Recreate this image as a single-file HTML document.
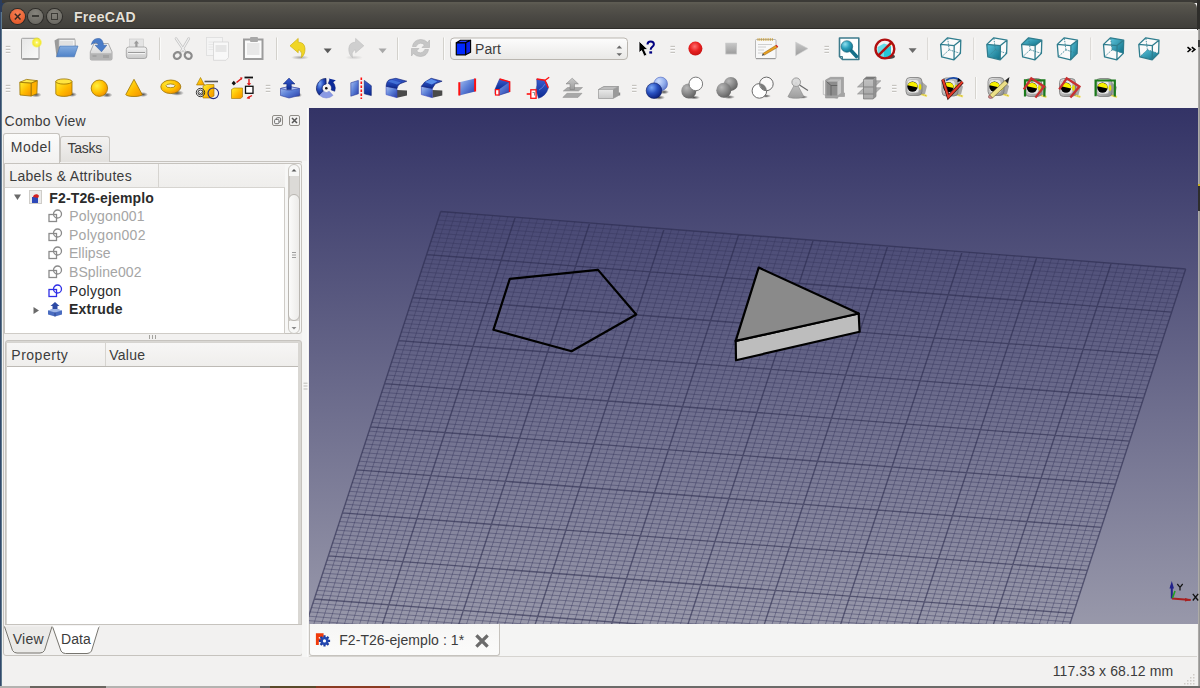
<!DOCTYPE html>
<html><head><meta charset="utf-8">
<style>
*{margin:0;padding:0;box-sizing:border-box}
html,body{width:1200px;height:688px;overflow:hidden;background:#f2f1f0;font-family:"Liberation Sans", sans-serif;}
.a{position:absolute}
.t{position:absolute;white-space:nowrap;color:#3c3c3c}
</style></head><body>
<div class="a" style="left:0;top:0;width:1200px;height:3px;background:#3b3a36"></div>
<div class="a" style="left:0;top:0;width:2px;height:686px;background:linear-gradient(90deg,#33496b 0,#33496b 1px,#5d788c 1px)"></div>
<div class="a" style="left:1197px;top:0;width:3px;height:30px;background:#2e2d2a"></div><div class="a" style="left:1197.5px;top:29px;width:2.5px;height:659px;background:linear-gradient(90deg,#b8b6b2,#8a8a8a)"></div><div class="a" style="left:1198px;top:40px;width:2px;height:7px;background:#3a3a3a"></div><div class="a" style="left:1198px;top:184px;width:2px;height:27px;background:#2e2e2e"></div><div class="a" style="left:1198px;top:184px;width:2px;height:1.5px;background:#c8b020"></div>
<div class="a" style="left:0;top:686px;width:1200px;height:2px;background:#6c6b69"></div>
<div class="a" style="left:0;top:686px;width:260px;height:2px;background:#b4b3b0"></div>
<div class="a" style="left:30px;top:686px;width:76px;height:2px;background:#6a6660"></div>
<div class="a" style="left:270px;top:686px;width:46px;height:2px;background:#5a4a2a"></div>
<div class="a" style="left:316px;top:686px;width:74px;height:2px;background:#8a3c22"></div>
<div class="a" style="left:0;top:0;width:12px;height:12px;background:#2a3c5c"></div><div class="a" style="left:2px;top:0;width:10px;height:3px;background:#3b3a36"></div>
<div class="a" style="left:2px;top:2px;width:1195px;height:27px;border-radius:6px 6px 0 0;background:linear-gradient(#5f5d54 0,#5c5a51 1.5px,#57554d 3px,#4b4944 14px,#3f3e3a 100%);"></div>
<div class="a" style="left:2px;top:28px;width:1195px;height:1px;background:#2e2d2a"></div>
<div class="a" style="left:2px;top:29px;width:1195px;height:2px;background:linear-gradient(#fdfdfd,#f6f6f5)"></div>
<div class="a" style="left:9.7px;top:8.7px;width:15.3px;height:15.3px;border-radius:50%;background:radial-gradient(circle at 50% 30%,#f78055,#e0501f);box-shadow:0 0 0 1px #2e2d2a"></div>
<svg class="a" style="left:9.7px;top:8.7px" width="16" height="16"><path d="M4.8 4.8L10.5 10.5M10.5 4.8L4.8 10.5" stroke="#3a2a22" stroke-width="1.5"/></svg>
<div class="a" style="left:28px;top:8.7px;width:15.3px;height:15.3px;border-radius:50%;background:radial-gradient(circle at 50% 30%,#85837c,#65635d);box-shadow:0 0 0 1px #2e2d2a"></div>
<div class="a" style="left:32.3px;top:15.4px;width:7px;height:1.6px;background:#3b3a36"></div>
<div class="a" style="left:46.7px;top:8.7px;width:15.3px;height:15.3px;border-radius:50%;background:radial-gradient(circle at 50% 30%,#85837c,#65635d);box-shadow:0 0 0 1px #2e2d2a"></div>
<div class="a" style="left:51.2px;top:13.2px;width:6.8px;height:6.8px;border:1.4px solid #3b3a36"></div>
<div class="t" style="left:74px;top:9.7px;font-size:14px;line-height:14px;font-weight:bold;color:#e4e0d8;letter-spacing:0.3px;text-shadow:0 0 1.5px #222">FreeCAD</div>

<div class="a" style="left:309px;top:108px;width:889px;height:516px;background:linear-gradient(#333366,#9898aa);overflow:hidden">
<svg width="889" height="516" style="position:absolute;left:0;top:0">
<path d="M139.1 104.1L-29.3 620.7M146.6 104.7L-21.9 621.2M154.1 105.2L-14.4 621.8M161.5 105.8L-7.0 622.4M168.9 106.4L0.5 623.0M176.4 106.9L7.9 623.5M183.8 107.5L15.4 624.1M191.3 108.1L22.8 624.7M198.8 108.7L30.3 625.3M213.6 109.8L45.2 626.4M221.1 110.4L52.6 627.0M228.5 111.0L60.1 627.6M236.0 111.6L67.5 628.1M243.5 112.1L75.0 628.7M250.9 112.7L82.4 629.3M258.4 113.3L89.9 629.9M265.8 113.8L97.3 630.4M273.2 114.4L104.8 631.0M288.1 115.6L119.7 632.2M295.6 116.2L127.1 632.7M303.0 116.7L134.6 633.3M310.5 117.3L142.0 633.9M318.0 117.9L149.5 634.5M325.4 118.4L156.9 635.0M332.9 119.0L164.4 635.6M340.3 119.6L171.8 636.2M347.8 120.2L179.3 636.8M362.6 121.3L194.2 637.9M370.1 121.9L201.6 638.5M377.5 122.5L209.1 639.1M385.0 123.1L216.5 639.6M392.5 123.6L224.0 640.2M399.9 124.2L231.4 640.8M407.4 124.8L238.9 641.4M414.8 125.3L246.3 641.9M422.2 125.9L253.8 642.5M437.1 127.1L268.7 643.7M444.6 127.7L276.1 644.2M452.0 128.2L283.6 644.8M459.5 128.8L291.0 645.4M467.0 129.4L298.5 646.0M474.4 129.9L305.9 646.5M481.9 130.5L313.4 647.1M489.3 131.1L320.8 647.7M496.8 131.7L328.3 648.3M511.6 132.8L343.2 649.4M519.1 133.4L350.6 650.0M526.5 134.0L358.1 650.6M534.0 134.6L365.5 651.1M541.5 135.1L373.0 651.7M548.9 135.7L380.4 652.3M556.4 136.3L387.9 652.9M563.8 136.8L395.3 653.4M571.2 137.4L402.8 654.0M586.1 138.6L417.7 655.2M593.6 139.2L425.1 655.7M601.0 139.7L432.6 656.3M608.5 140.3L440.0 656.9M616.0 140.9L447.5 657.5M623.4 141.4L454.9 658.0M630.9 142.0L462.4 658.6M638.3 142.6L469.8 659.2M645.8 143.2L477.3 659.8M660.6 144.3L492.2 660.9M668.1 144.9L499.6 661.5M675.5 145.5L507.1 662.1M683.0 146.1L514.5 662.6M690.5 146.6L522.0 663.2M697.9 147.2L529.4 663.8M705.3 147.8L536.9 664.4M712.8 148.4L544.3 664.9M720.2 148.9L551.8 665.5M735.1 150.1L566.7 666.7M742.6 150.6L574.1 667.2M750.0 151.2L581.6 667.8M757.5 151.8L589.0 668.4M765.0 152.4L596.5 669.0M772.4 152.9L603.9 669.5M779.8 153.5L611.4 670.1M787.3 154.1L618.8 670.7M794.8 154.7L626.3 671.3M809.6 155.8L641.2 672.4M817.1 156.4L648.6 673.0M824.5 157.0L656.1 673.6M832.0 157.6L663.5 674.1M839.5 158.1L671.0 674.7M846.9 158.7L678.4 675.3M854.3 159.3L685.9 675.9M861.8 159.9L693.3 676.4M869.2 160.4L700.8 677.0M130.3 107.8L875.3 165.3M128.9 112.1L873.9 169.6M127.5 116.4L872.5 173.9M126.1 120.7L871.1 178.2M124.7 125.0L869.7 182.5M123.3 129.3L868.3 186.8M121.9 133.6L866.9 191.1M120.5 137.9L865.5 195.4M119.1 142.2L864.1 199.7M116.3 150.9L861.3 208.4M114.9 155.2L859.9 212.7M113.4 159.5L858.4 217.0M112.0 163.8L857.0 221.3M110.6 168.1L855.6 225.6M109.2 172.4L854.2 229.9M107.8 176.7L852.8 234.2M106.4 181.0L851.4 238.5M105.0 185.3L850.0 242.8M102.2 193.9L847.2 251.4M100.8 198.2L845.8 255.7M99.4 202.5L844.4 260.0M98.0 206.8L843.0 264.3M96.6 211.1L841.6 268.6M95.2 215.4L840.2 272.9M93.8 219.7L838.8 277.2M92.4 224.0L837.4 281.5M91.0 228.3L836.0 285.8M88.2 237.0L833.2 294.5M86.8 241.3L831.8 298.8M85.4 245.6L830.4 303.1M84.0 249.9L829.0 307.4M82.6 254.2L827.6 311.7M81.2 258.5L826.2 316.0M79.8 262.8L824.8 320.3M78.3 267.1L823.3 324.6M76.9 271.4L821.9 328.9M74.1 280.0L819.1 337.5M72.7 284.3L817.7 341.8M71.3 288.6L816.3 346.1M69.9 292.9L814.9 350.4M68.5 297.2L813.5 354.7M67.1 301.5L812.1 359.0M65.7 305.8L810.7 363.3M64.3 310.1L809.3 367.6M62.9 314.4L807.9 371.9M60.1 323.1L805.1 380.6M58.7 327.4L803.7 384.9M57.3 331.7L802.3 389.2M55.9 336.0L800.9 393.5M54.5 340.3L799.5 397.8M53.1 344.6L798.1 402.1M51.7 348.9L796.7 406.4M50.3 353.2L795.3 410.7M48.9 357.5L793.9 415.0M46.1 366.1L791.1 423.6M44.7 370.4L789.7 427.9M43.2 374.7L788.2 432.2M41.8 379.0L786.8 436.5M40.4 383.3L785.4 440.8M39.0 387.6L784.0 445.1M37.6 391.9L782.6 449.4M36.2 396.2L781.2 453.7M34.8 400.5L779.8 458.0M32.0 409.2L777.0 466.7M30.6 413.5L775.6 471.0M29.2 417.8L774.2 475.3M27.8 422.1L772.8 479.6M26.4 426.4L771.4 483.9M25.0 430.7L770.0 488.2M23.6 435.0L768.6 492.5M22.2 439.3L767.2 496.8M20.8 443.6L765.8 501.1M18.0 452.2L763.0 509.7M16.6 456.5L761.6 514.0M15.2 460.8L760.2 518.3M13.8 465.1L758.8 522.6M12.4 469.4L757.4 526.9M11.0 473.7L756.0 531.2M9.6 478.0L754.6 535.5M8.1 482.3L753.1 539.8M6.7 486.6L751.7 544.1M3.9 495.3L748.9 552.8M2.5 499.6L747.5 557.1M1.1 503.9L746.1 561.4M-0.3 508.2L744.7 565.7M-1.7 512.5L743.3 570.0M-3.1 516.8L741.9 574.3M-4.5 521.1L740.5 578.6M-5.9 525.4L739.1 582.9M-7.3 529.7L737.7 587.2M-10.1 538.3L734.9 595.8M-11.5 542.6L733.5 600.1M-12.9 546.9L732.1 604.4M-14.3 551.2L730.7 608.7M-15.7 555.5L729.3 613.0M-17.1 559.8L727.9 617.3M-18.5 564.1L726.5 621.6M-19.9 568.4L725.1 625.9M-21.3 572.7L723.7 630.2M-24.1 581.4L720.9 638.9M-25.5 585.7L719.5 643.2M-27.0 590.0L718.0 647.5M-28.4 594.3L716.6 651.8M-29.8 598.6L715.2 656.1M-31.2 602.9L713.8 660.4M-32.6 607.2L712.4 664.7M-34.0 611.5L711.0 669.0M-35.4 615.8L709.6 673.3" stroke="#34345a" stroke-opacity="0.42" stroke-width="1" fill="none"/>
<path d="M131.7 103.5L-36.8 620.1M206.2 109.2L37.7 625.8M280.7 115.0L112.2 631.6M355.2 120.8L186.7 637.3M429.7 126.5L261.2 643.1M504.2 132.2L335.7 648.8M578.7 138.0L410.2 654.6M653.2 143.8L484.7 660.3M727.7 149.5L559.2 666.1M802.2 155.2L633.7 671.8M876.7 161.0L708.2 677.6M131.7 103.5L876.7 161.0M117.7 146.6L862.7 204.1M103.6 189.6L848.6 247.1M89.6 232.6L834.6 290.1M75.5 275.7L820.5 333.2M61.5 318.8L806.5 376.2M47.5 361.8L792.5 419.3M33.4 404.8L778.4 462.3M19.4 447.9L764.4 505.4M5.3 491.0L750.3 548.5M-8.7 534.0L736.3 591.5M-22.7 577.0L722.3 634.5M-36.8 620.1L708.2 677.6" stroke="#2a2a4c" stroke-opacity="0.6" stroke-width="1.35" fill="none"/>
<polygon points="200.8,170.9 289.0,161.9 327.2,206.5 262.6,243.3 184.4,221.8" fill="none" stroke="#000" stroke-width="2.2" stroke-linejoin="round"/><polygon points="426.7,232.9 549.7,205.5 550.6,223.8 427.0,252.2" fill="#bdbdbd" stroke="#000" stroke-width="2.2" stroke-linejoin="round"/><polygon points="449.7,159.6 549.7,205.5 426.7,232.9" fill="#8a8a8a" stroke="#000" stroke-width="2.2" stroke-linejoin="round"/>
</svg>
</div>
<div class="t" style="left:4.6px;top:113.7px;font-size:14px;line-height:14px;font-weight:400;color:#3c3c3c;letter-spacing:0.208px">Combo View</div>
<div class="a" style="left:272px;top:115px;width:11px;height:11px;border:1px solid #8f8c87;border-radius:2px;background:#f2f1f0"></div>
<svg class="a" style="left:272px;top:115px" width="11" height="11"><rect x="4.3" y="2.7" width="4.3" height="4.3" rx="1" fill="none" stroke="#606060" stroke-width="0.9"/><rect x="2.6" y="4.4" width="4.3" height="4.3" rx="1" fill="#f6f6f6" stroke="#606060" stroke-width="0.9"/></svg>
<div class="a" style="left:289px;top:115px;width:11px;height:11px;border:1px solid #8f8c87;border-radius:2px;background:#f2f1f0"></div>
<svg class="a" style="left:289px;top:115px" width="11" height="11"><path d="M3 3L8 8M8 3L3 8" stroke="#555" stroke-width="1.5"/></svg>
<div class="a" style="left:2.5px;top:161px;width:300px;height:495px;border:1px solid #c6c3be;border-radius:0 3px 3px 3px;background:#f2f1f0"></div>
<div class="a" style="left:60px;top:135.5px;width:49.5px;height:26px;border:1px solid #c6c3be;border-bottom:none;border-radius:3px 3px 0 0;background:linear-gradient(#f3f2f1,#e3e1de)"></div>
<div class="a" style="left:2.5px;top:132.5px;width:57.5px;height:30px;border:1px solid #c6c3be;border-bottom:none;border-radius:3px 3px 0 0;background:linear-gradient(#fbfbfa,#f2f1f0)"></div>
<div class="t" style="left:10.8px;top:139.5px;font-size:14px;line-height:14px;font-weight:400;color:#3c3c3c;letter-spacing:0.452px">Model</div>
<div class="t" style="left:67.5px;top:140.5px;font-size:14px;line-height:14px;font-weight:400;color:#3c3c3c;letter-spacing:-0.259px">Tasks</div>
<div class="a" style="left:4px;top:163px;width:297.5px;height:171px;border:1px solid #c6c3be;border-radius:0 3px 3px 0;background:#f7f7f6"></div>
<div class="a" style="left:5px;top:164px;width:280px;height:169.5px;border-right:1px solid #cfccc7;border-bottom:1px solid #cfccc7;background:#fff"></div>
<div class="a" style="left:5px;top:164px;width:279.5px;height:23.5px;background:linear-gradient(#f5f4f3,#efeeec);border-bottom:1px solid #d6d4d0"></div>
<div class="a" style="left:158px;top:164px;width:1px;height:23px;background:#d6d4d0"></div>
<div class="a" style="left:288px;top:163.5px;width:12px;height:170px;border:1px solid #c9c6c1;border-radius:6px;background:#f7f7f6"></div>
<div class="a" style="left:288.5px;top:176px;width:11px;height:145px;background:#dcdad7;border-left:1px solid #c9c6c1;border-right:1px solid #c9c6c1"></div>
<div class="a" style="left:288px;top:193.5px;width:12px;height:127px;border:1px solid #b9b6b1;border-radius:6px;background:linear-gradient(90deg,#fbfbfa,#ecebe9)"></div>
<svg class="a" style="left:288px;top:163px" width="12" height="172"><path d="M3.5 8.5L6 6L8.5 8.5Z" fill="#5a5a5a"/><path d="M3.5 164L6 166.5L8.5 164Z" fill="#8a8a8a"/><path d="M4 89.5H8M4 92H8M4 94.5H8" stroke="#888" stroke-width="0.8"/></svg>
<div class="t" style="left:9.3px;top:169.3px;font-size:14px;line-height:14px;font-weight:400;color:#3c3c3c;letter-spacing:0.315px">Labels &amp; Attributes</div>
<div class="t" style="left:49.3px;top:191.0px;font-size:14px;line-height:14px;font-weight:700;color:#2b2b2b;letter-spacing:0.143px">F2-T26-ejemplo</div>
<div class="t" style="left:69.3px;top:209.3px;font-size:14px;line-height:14px;font-weight:400;color:#a5a5a5;letter-spacing:0.145px">Polygon001</div>
<div class="t" style="left:69.0px;top:227.7px;font-size:14px;line-height:14px;font-weight:400;color:#a5a5a5;letter-spacing:0.275px">Polygon002</div>
<div class="t" style="left:69.0px;top:246.1px;font-size:14px;line-height:14px;font-weight:400;color:#a5a5a5;letter-spacing:0.036px">Ellipse</div>
<div class="t" style="left:69.0px;top:265.0px;font-size:14px;line-height:14px;font-weight:400;color:#a5a5a5;letter-spacing:0.097px">BSpline002</div>
<div class="t" style="left:69.0px;top:283.7px;font-size:14px;line-height:14px;font-weight:400;color:#2b2b2b;letter-spacing:0.244px">Polygon</div>
<div class="t" style="left:69.0px;top:302.1px;font-size:14px;line-height:14px;font-weight:700;color:#2b2b2b;letter-spacing:0.225px">Extrude</div>
<svg class="a" style="left:13px;top:193px" width="9" height="8"><path d="M1 1.5H8L4.5 7Z" fill="#6a6a6a"/></svg><svg class="a" style="left:32px;top:305.5px" width="8" height="9"><path d="M1.5 1V8L7 4.5Z" fill="#6a6a6a"/></svg>
<svg class="a" style="left:29px;top:190px" width="13" height="14"><rect x="0.5" y="0.5" width="12" height="13" fill="#ecebea" stroke="#cfcdc9"/><path d="M3 7h6v6H3z" fill="#2d48b8"/><path d="M4 7c0-3 5-4 6-1l-1 2z" fill="#d42020"/></svg>
<svg class="a" style="left:48px;top:209.0px" width="15" height="14"><rect x="1" y="5.5" width="7.5" height="7" fill="none" stroke="#8a8a8a" stroke-width="1.3"/><circle cx="9.5" cy="5" r="4" fill="none" stroke="#8a8a8a" stroke-width="1.3"/></svg>
<svg class="a" style="left:48px;top:227.5px" width="15" height="14"><rect x="1" y="5.5" width="7.5" height="7" fill="none" stroke="#8a8a8a" stroke-width="1.3"/><circle cx="9.5" cy="5" r="4" fill="none" stroke="#8a8a8a" stroke-width="1.3"/></svg>
<svg class="a" style="left:48px;top:246.0px" width="15" height="14"><rect x="1" y="5.5" width="7.5" height="7" fill="none" stroke="#8a8a8a" stroke-width="1.3"/><circle cx="9.5" cy="5" r="4" fill="none" stroke="#8a8a8a" stroke-width="1.3"/></svg>
<svg class="a" style="left:48px;top:265.0px" width="15" height="14"><rect x="1" y="5.5" width="7.5" height="7" fill="none" stroke="#8a8a8a" stroke-width="1.3"/><circle cx="9.5" cy="5" r="4" fill="none" stroke="#8a8a8a" stroke-width="1.3"/></svg>
<svg class="a" style="left:48px;top:283.5px" width="15" height="14"><rect x="1" y="5.5" width="7.5" height="7" fill="none" stroke="#2f2fe6" stroke-width="1.3"/><circle cx="9.5" cy="5" r="4" fill="none" stroke="#2f2fe6" stroke-width="1.3"/></svg>
<svg class="a" style="left:47px;top:302px" width="16" height="15"><path d="M1 8.5L8 6.5L15 8.5V12.5L8 14.5L1 12.5Z" fill="#4a6cc0"/><path d="M1 8.5L8 10.5L15 8.5L8 6.5Z" fill="#9fb6e8"/><path d="M8 10.5V14.5" stroke="#2a3f86" stroke-width="0.8"/><path d="M5.5 7V4H3.5L8 0L12.5 4H10.5V7Z" fill="#2c4aa5"/></svg>
<svg class="a" style="left:147px;top:334px" width="12" height="6"><path d="M2.5 1V5M5.5 1V5M8.5 1V5" stroke="#9a9894" stroke-width="0.9"/></svg>
<div class="a" style="left:4.5px;top:339.5px;width:297px;height:285.5px;border:1px solid #c6c3be;border-radius:3px 3px 0 0;background:#d9d7d3"></div>
<div class="a" style="left:5.5px;top:341.5px;width:292px;height:282px;border-left:1px solid #d6d4d0;border-top:1px solid #d6d4d0;background:#fff"></div>
<div class="a" style="left:6.5px;top:342.5px;width:291px;height:24px;background:linear-gradient(#f7f6f5,#efeeec);border-bottom:1px solid #bdbab5"></div>
<div class="a" style="left:104.5px;top:343px;width:1px;height:23px;background:#d6d4d0"></div>
<div class="a" style="left:4.5px;top:623.5px;width:297px;height:1.2px;background:#c6c3be"></div>
<div class="t" style="left:11.3px;top:348.0px;font-size:14px;line-height:14px;font-weight:400;color:#3c3c3c;letter-spacing:0.510px">Property</div>
<div class="t" style="left:109.3px;top:348.0px;font-size:14px;line-height:14px;font-weight:400;color:#3c3c3c;letter-spacing:0.244px">Value</div>
<svg class="a" style="left:0;top:622px" width="110" height="36">
<path d="M4.5 4.5L12.5 28.5Q14 31 17 31H40Q43 31 44.5 28.5L52 4.5" fill="#ebeae8" stroke="#77756f" stroke-width="1"/>
<path d="M52.5 4.5L61 29Q62.5 31.5 65.5 31.5H87Q90 31.5 91.5 29L99 4.5" fill="#fff" stroke="#77756f" stroke-width="1"/>
<path d="M52.5 4.5H99" stroke="#fff" stroke-width="1.5"/>
</svg>
<div class="t" style="left:12.8px;top:631.5px;font-size:14px;line-height:14px;font-weight:400;color:#3c3c3c;letter-spacing:0.227px">View</div>
<div class="t" style="left:61.0px;top:632.0px;font-size:14px;line-height:14px;font-weight:400;color:#3c3c3c;letter-spacing:0.105px">Data</div>
<div class="a" style="left:302.2px;top:161px;width:6.3px;height:496px;background:#f6f6f5"></div><div class="a" style="left:307.3px;top:108px;width:1.2px;height:549px;background:#fbfbfb"></div>
<div class="a" style="left:302.5px;top:377px;width:5px;height:10px;"><svg width="5" height="10"><path d="M0.5 2.2H4.5M0.5 5H4.5M0.5 8H4.5" stroke="#b0aea9" stroke-width="0.8"/></svg></div>
<div class="a" style="left:308.5px;top:624px;width:888.5px;height:33px;background:#f4f4f3;border-bottom:1px solid #d6d4d0"></div>
<div class="a" style="left:308.5px;top:624px;width:191px;height:32px;border:1px solid #c6c3be;border-top:none;border-radius:0 0 3px 3px;background:linear-gradient(#f6f6f5,#fbfbfa)"></div>
<svg class="a" style="left:312px;top:630px" width="24" height="20"><path d="M3.9 3.2H11.6V7H6.8V8.6H9.5V11.2H6.8V15.1H3.9Z" fill="#f03a0a"/><g transform="translate(12.5 10.9)"><path d="M0 -5.6V5.6M-5.6 0H5.6M-4 -4L4 4M4 -4L-4 4" stroke="#1a3aa0" stroke-width="2.2"/><circle r="4" fill="#2448b0"/><circle r="1.6" fill="#fff"/></g></svg>
<div class="t" style="left:339.2px;top:633.3px;font-size:14px;line-height:14px;font-weight:400;color:#3c3c3c;letter-spacing:0.067px">F2-T26-ejemplo : 1*</div>
<svg class="a" style="left:475px;top:634px" width="14" height="14"><path d="M2.5 2.5L11.5 11.5M11.5 2.5L2.5 11.5" stroke="#6b6b6b" stroke-width="3.2" stroke-linecap="square"/></svg>
<div class="a" style="left:2px;top:657px;width:1195px;height:28.5px;background:#f2f1f0"></div>
<div class="t" style="left:1052.7px;top:664.3px;font-size:14px;line-height:14px;font-weight:400;color:#3c3c3c;letter-spacing:0.105px">117.33 x 68.12 mm</div>
<svg class="a" style="left:1183px;top:672px" width="13" height="13"><g fill="#cfccc7"><rect x="10" y="2" width="1.5" height="1.5"/><rect x="7" y="5" width="1.5" height="1.5"/><rect x="10" y="5" width="1.5" height="1.5"/><rect x="4" y="8" width="1.5" height="1.5"/><rect x="7" y="8" width="1.5" height="1.5"/><rect x="10" y="8" width="1.5" height="1.5"/><rect x="1" y="11" width="1.5" height="1.5"/><rect x="4" y="11" width="1.5" height="1.5"/><rect x="7" y="11" width="1.5" height="1.5"/><rect x="10" y="11" width="1.5" height="1.5"/></g></svg>
<svg class="a" style="left:1160px;top:575px" width="40" height="30"><path d="M11.8 23.5V10" stroke="#22228a" stroke-width="2"/><path d="M9.5 13.5L11.8 6L14 13.5Z" fill="#22228a"/><path d="M12 23.5L30.7 25" stroke="#a82020" stroke-width="1.8"/><path d="M25 23L31 25L25 26.6Z" fill="#a82020"/><path d="M12.5 23L15 16" stroke="#20a020" stroke-width="1.6"/><path d="M17.3 9L20 12.3L22.7 9M20 12.3V15.6" fill="none" stroke="#111" stroke-width="1.2"/><path d="M32.8 18.8L38.2 25.5M38.2 18.8L32.8 25.5" fill="none" stroke="#111" stroke-width="1.3"/></svg>
<svg class="a" style="left:0;top:0" width="1200" height="108" viewBox="0 0 1200 108"><defs>
<linearGradient id="gDoc" x1="0" y1="0" x2="1" y2="1"><stop offset="0" stop-color="#e6e6e6"/><stop offset="1" stop-color="#fafafa"/></linearGradient>
<radialGradient id="gGlow"><stop offset="0" stop-color="#ffffff"/><stop offset="0.25" stop-color="#fbf56a"/><stop offset="0.7" stop-color="#f4ea1e" stop-opacity="0.9"/><stop offset="1" stop-color="#f4ea1e" stop-opacity="0"/></radialGradient>
<linearGradient id="gBlue" x1="0" y1="0" x2="0" y2="1"><stop offset="0" stop-color="#86aee0"/><stop offset="1" stop-color="#4f82c8"/></linearGradient>
<linearGradient id="gGrayV" x1="0" y1="0" x2="0" y2="1"><stop offset="0" stop-color="#f4f4f4"/><stop offset="1" stop-color="#c9c9c9"/></linearGradient>
<linearGradient id="gGrayD" x1="0" y1="0" x2="0" y2="1"><stop offset="0" stop-color="#c8c8c8"/><stop offset="1" stop-color="#9c9c9c"/></linearGradient>
<linearGradient id="gYel" x1="0" y1="0" x2="1" y2="1"><stop offset="0" stop-color="#fff030"/><stop offset="0.55" stop-color="#ffba00"/><stop offset="1" stop-color="#f29000"/></linearGradient>
<radialGradient id="gYelR" cx="0.35" cy="0.35" r="0.7"><stop offset="0" stop-color="#fff040"/><stop offset="0.6" stop-color="#ffc000"/><stop offset="1" stop-color="#f09000"/></radialGradient>
<radialGradient id="gRed" cx="0.45" cy="0.35" r="0.7"><stop offset="0" stop-color="#ff7070"/><stop offset="0.5" stop-color="#e82020"/><stop offset="1" stop-color="#c01010"/></radialGradient>
<radialGradient id="gTeal" cx="0.35" cy="0.3" r="0.75"><stop offset="0" stop-color="#8fe0f0"/><stop offset="0.5" stop-color="#2aa0bc"/><stop offset="1" stop-color="#16708a"/></radialGradient>
<linearGradient id="gTealF" x1="0" y1="0" x2="1" y2="1"><stop offset="0" stop-color="#5cc4dc"/><stop offset="1" stop-color="#0e6f86"/></linearGradient>
<linearGradient id="gPB" x1="0" y1="0" x2="1" y2="1"><stop offset="0" stop-color="#a8c0f0"/><stop offset="0.5" stop-color="#5a7ed6"/><stop offset="1" stop-color="#2a3ea8"/></linearGradient>
<linearGradient id="gPBd" x1="0" y1="0" x2="0" y2="1"><stop offset="0" stop-color="#3a5ed0"/><stop offset="1" stop-color="#0c2a90"/></linearGradient>
<radialGradient id="gSphB" cx="0.35" cy="0.3" r="0.75"><stop offset="0" stop-color="#7aa8f8"/><stop offset="0.5" stop-color="#2850c0"/><stop offset="1" stop-color="#0a1e78"/></radialGradient>
<radialGradient id="gSphL" cx="0.35" cy="0.3" r="0.75"><stop offset="0" stop-color="#d0e0ff"/><stop offset="0.6" stop-color="#90acec"/><stop offset="1" stop-color="#6078c8"/></radialGradient>
<radialGradient id="gSphG" cx="0.35" cy="0.3" r="0.8"><stop offset="0" stop-color="#b8b8b8"/><stop offset="0.6" stop-color="#808080"/><stop offset="1" stop-color="#5a5a5a"/></radialGradient>
<linearGradient id="gGrayB" x1="0" y1="0" x2="1" y2="1"><stop offset="0" stop-color="#e8e8e8"/><stop offset="1" stop-color="#8a8a8a"/></linearGradient>
<radialGradient id="gShadow"><stop offset="0" stop-color="#3a3a3a" stop-opacity="0.9"/><stop offset="1" stop-color="#3a3a3a" stop-opacity="0"/></radialGradient>
</defs><defs><linearGradient id="gCombo" x1="0" y1="0" x2="0" y2="1"><stop offset="0" stop-color="#fdfdfd"/><stop offset="1" stop-color="#e9e8e6"/></linearGradient></defs><path d="M5.8 46.4h4.5M5.8 49.4h4.5M5.8 52.4h4.5" stroke="#b5b2ad" stroke-width="1"/><path d="M5.8 47.3h4.5M5.8 50.3h4.5M5.8 53.3h4.5" stroke="#ffffff" stroke-width="0.8"/><rect x="21.5" y="38.3" width="17.5" height="21" rx="1" fill="url(#gDoc)" stroke="#a0a0a0" stroke-width="1"/><path d="M22.5 58.8h16" stroke="#8a8a8a" stroke-width="1.2"/><circle cx="36.8" cy="42.5" r="5.5" fill="url(#gGlow)"/><path d="M54.5 40.5L58 38.5H75L75.5 46L59 56.5H56.5Z" fill="#9a9a9a"/><path d="M59 39.5H75V47H59Z" fill="#f2f2f2" stroke="#b0b0b0" stroke-width="0.8"/><path d="M60 42H73M60 44H73" stroke="#c8c8c8" stroke-width="0.8"/><path d="M60 46H78L74.3 56.8H56.5Z" fill="url(#gBlue)" stroke="#3f6fb0" stroke-width="0.6"/><path d="M94 43.5H108.3L112 51.8V58.8Q112 60 110.8 60H91.5Q90.3 60 90.3 58.8V51.8Z" fill="url(#gGrayV)" stroke="#9a9a9a" stroke-width="0.8"/><path d="M90.5 53.2H111.8V58.8Q111.8 59.8 110.8 59.8H91.5Q90.5 59.8 90.5 58.8Z" fill="#b4b4b4"/><path d="M92.5 56h4M104 55v3M106 55v3M108 55v3" stroke="#8c8c8c" stroke-width="0.8"/><path d="M91.3 44.5Q93 37.5 99.5 38.5Q103 39.5 103.5 45.2H106.8L101.5 51.8L95 45.2H98.3Q98 42.5 95.5 42.8Q93 43.2 91.3 44.5Z" fill="#4a7cc8" stroke="#2e5aa0" stroke-width="0.5"/><rect x="129.5" y="39" width="13.8" height="9" fill="#e4e4e4" stroke="#c8c8c8" stroke-width="0.6"/><path d="M136.4 40.5L139 43.5H137.5V47H135.3V43.5H133.8Z" fill="#9a9a9a"/><rect x="126.3" y="47" width="20.5" height="11.5" rx="2.5" fill="url(#gGrayV)" stroke="#9c9c9c" stroke-width="0.8"/><path d="M128 52.5H145" stroke="#9a9a9a" stroke-width="1"/><path d="M128 53.5H145" stroke="#fafafa" stroke-width="0.8"/><path d="M159.5 37.5V60.0" stroke="#d3d1cc" stroke-width="1"/><path d="M160.5 37.5V60.0" stroke="#fbfbfa" stroke-width="1"/><path d="M176 38.5L184.5 51M188.8 38.5L181.5 51" stroke="#c4c4c4" stroke-width="2.6" stroke-linecap="round"/><path d="M176 38.5L184.5 51M188.8 38.5L181.5 51" stroke="#f2f2f2" stroke-width="1.2" stroke-linecap="round"/><ellipse cx="177.3" cy="55.5" rx="3.6" ry="3.2" transform="rotate(-35 177.3 55.5)" fill="none" stroke="#8c8c8c" stroke-width="2.2"/><ellipse cx="188.2" cy="55.5" rx="3.6" ry="3.2" transform="rotate(35 188.2 55.5)" fill="none" stroke="#8c8c8c" stroke-width="2.2"/><rect x="206.5" y="37.5" width="16" height="18" fill="#f4f4f4" stroke="#dcdcdc" stroke-width="0.8"/><path d="M208.5 42h6M208.5 44.5h6M208.5 47h6M208.5 49.5h6" stroke="#e4e4e4" stroke-width="0.8"/><path d="M213.5 42H228.5V57.5L226 60.3H213.5Z" fill="#f8f8f8" stroke="#d4d4d4" stroke-width="0.8"/><rect x="215.5" y="45" width="11" height="7" fill="#e6e6e6"/><rect x="244" y="39.5" width="18.5" height="19.5" fill="#fbfbfb" stroke="#9c9c9c" stroke-width="2"/><rect x="250" y="37" width="8" height="5" rx="1" fill="#a8a8a8"/><rect x="247" y="43" width="12.5" height="12" fill="#e8e8e8"/><path d="M276.5 37.5V60.0" stroke="#d3d1cc" stroke-width="1"/><path d="M277.5 37.5V60.0" stroke="#fbfbfa" stroke-width="1"/><ellipse cx="300" cy="57.5" rx="9" ry="2.2" fill="url(#gShadow)" opacity="0.45"/><path d="M290 45.8L298.2 38.4V42.2Q304.5 42.2 305 48.5Q305.3 54.5 301.2 57.8Q302.5 53 300.5 51Q299.5 50 298.2 50V52.8Z" fill="#f0d626" stroke="#c8a800" stroke-width="0.6"/><path d="M323.7 48.4H331.7L327.7 53.2Z" fill="#5a5a5a"/><ellipse cx="354" cy="57.5" rx="9" ry="2.2" fill="url(#gShadow)" opacity="0.2"/><path d="M363.8 45.8L355.6 38.4V42.2Q349.3 42.2 348.8 48.5Q348.5 54.5 352.6 57.8Q351.3 53 353.3 51Q354.3 50 355.6 50V52.8Z" fill="#cfcfcf" stroke="#bdbdbd" stroke-width="0.6"/><path d="M378.6 48.4H386.6L382.6 53.2Z" fill="#a8a8a8"/><path d="M397.5 37.5V60.0" stroke="#d3d1cc" stroke-width="1"/><path d="M398.5 37.5V60.0" stroke="#fbfbfa" stroke-width="1"/><path d="M412.5 46.5Q413.5 40 420.5 39.5Q425 39.5 427.5 42.5L429.5 40V47.5H422L424.5 45Q422.5 43 420.5 43.2Q417 43.5 416.2 46.5Z" fill="#c6c6c6" stroke="#b4b4b4" stroke-width="0.6"/><path d="M428.5 49.5Q427.5 56 420.5 56.5Q416 56.5 413.5 53.5L411.5 56V48.5H419L416.5 51Q418.5 53 420.5 52.8Q424 52.5 424.8 49.5Z" fill="#c6c6c6" stroke="#b4b4b4" stroke-width="0.6"/><path d="M443.5 37.5V60.0" stroke="#d3d1cc" stroke-width="1"/><path d="M444.5 37.5V60.0" stroke="#fbfbfa" stroke-width="1"/><rect x="450.5" y="38" width="177" height="21.5" rx="3.5" fill="url(#gCombo)" stroke="#bab6b0" stroke-width="1"/><path d="M456.3 42.8L460.5 40.3H470.6L465.6 42.8Z" fill="#2b40ff" stroke="#000" stroke-width="1.1" stroke-linejoin="round"/><path d="M465.6 42.8L470.6 40.3V52.3L465.6 54.8Z" fill="#0a20e8" stroke="#000" stroke-width="1.1" stroke-linejoin="round"/><rect x="456.3" y="42.8" width="9.3" height="12" fill="#0028ff" stroke="#000" stroke-width="1.2" stroke-linejoin="round"/><path d="M616.5 48.5L619.3 45.6L622.1 48.5Z" fill="#6a6a6a"/><path d="M616.5 53.2L619.3 56.1L622.1 53.2Z" fill="#6a6a6a"/><path d="M639 41.1V52.75L641.6 50.6L644.1 56.2L646.9 55L644.3 49.6L647.9 49.5Z" fill="#000" stroke="#fff" stroke-width="0.8" stroke-linejoin="round"/><path d="M647.5 44.5Q647.5 41.5 650.7 41.5Q653.9 41.5 653.9 44.3Q653.9 46 652 47.2Q650.7 48 650.7 49.8" fill="none" stroke="#000080" stroke-width="2"/><rect x="649.3" y="51.3" width="2.8" height="2.3" fill="#000080"/><path d="M670.5 46.4h4.5M670.5 49.4h4.5M670.5 52.4h4.5" stroke="#b5b2ad" stroke-width="1"/><path d="M670.5 47.3h4.5M670.5 50.3h4.5M670.5 53.3h4.5" stroke="#ffffff" stroke-width="0.8"/><circle cx="695.4" cy="48.6" r="7" fill="url(#gRed)"/><rect x="725.8" y="43.2" width="10.8" height="10.8" fill="url(#gGrayD)" stroke="#c4c4c4" stroke-width="0.8"/><rect x="755.5" y="39.5" width="20.5" height="19" rx="1" fill="#f8f8f8" stroke="#a8a8a8" stroke-width="0.8"/><path d="M756 58.6h19.5" stroke="#9a9a9a" stroke-width="1.2"/><path d="M757.5 39.5h16" stroke="#c8a040" stroke-width="2.4" stroke-dasharray="1 0.8"/><path d="M758 44.5h14M758 47h8M758 50h6M758 53h5" stroke="#c4c4c4" stroke-width="0.8"/><path d="M762.8 53.5L775.5 45.5L777.3 47.5L764.5 55Z" fill="#e8a020" stroke="#8a5a10" stroke-width="0.5"/><path d="M775.5 45.5L776.5 44.8L778.3 46.8L777.3 47.5Z" fill="#e02020"/><path d="M762.8 53.5L764.5 55L761.8 55.8Z" fill="#3a3a3a"/><path d="M795.6 42.1V55.7L808 48.6Z" fill="url(#gGrayD)" stroke="#d0d0d0" stroke-width="0.6"/><path d="M824.5 46.4h4.5M824.5 49.4h4.5M824.5 52.4h4.5" stroke="#b5b2ad" stroke-width="1"/><path d="M824.5 47.3h4.5M824.5 50.3h4.5M824.5 53.3h4.5" stroke="#ffffff" stroke-width="0.8"/><path d="M839.5 38H858.8V59.5H842.5L839.5 56.5Z" fill="#fff" stroke="#3e7b8c" stroke-width="1.6" stroke-linejoin="round"/><path d="M839.5 56.5h3v3" fill="none" stroke="#3e7b8c" stroke-width="1"/><path d="M851.5 51L856.5 56.5" stroke="#16708a" stroke-width="3.6" stroke-linecap="round"/><circle cx="846.9" cy="46.5" r="5.8" fill="url(#gTeal)" stroke="#0f5a70" stroke-width="0.6"/><ellipse cx="889" cy="56.5" rx="6" ry="2.5" fill="#2a2a2a" opacity="0.85"/><path d="M877.5 47L884 43.5L891 46V55.5L884 58L877.5 55Z" fill="#66dde6"/><path d="M884 50V58L891 55.5V46Z" fill="#26c6d6"/><path d="M884 50L893 42.5" stroke="#f0e020" stroke-width="1.6"/><circle cx="884.9" cy="49" r="9.4" fill="none" stroke="#b00f0f" stroke-width="2.4"/><path d="M891.6 42.3L878.2 55.7" stroke="#b00f0f" stroke-width="2.4"/><path d="M908.6 48.2H916.6L912.6 53.0Z" fill="#6a6a6a"/><path d="M927.8 37.5V60.0" stroke="#d3d1cc" stroke-width="1"/><path d="M928.8 37.5V60.0" stroke="#fbfbfa" stroke-width="1"/><path d="M940.6 44.4L954.2 45.6L954.0 59.8L941.6 56.8ZM940.6 44.4L947.6 37.8L960.8 40.2L954.2 45.6ZM954.2 45.6L960.8 40.2L960.4 53.4L954.0 59.8Z" fill="#fafafa"/><path d="M949.2 49.8L947.6 37.8M949.2 49.8L941.6 56.8M949.2 49.8L960.4 53.4" stroke="#3a8596" stroke-width="0.9" stroke-dasharray="1.5 1"/><path d="M940.6 44.4L954.2 45.6L954.0 59.8L941.6 56.8ZM940.6 44.4L947.6 37.8L960.8 40.2L954.2 45.6M960.8 40.2L960.4 53.4L954.0 59.8" fill="none" stroke="#2f7d8e" stroke-width="1.3" stroke-linejoin="round"/><path d="M986.8 44.4L1000.4 45.6L1000.2 59.8L987.8 56.8ZM986.8 44.4L993.8 37.8L1007.0 40.2L1000.4 45.6ZM1000.4 45.6L1007.0 40.2L1006.6 53.4L1000.2 59.8Z" fill="#fafafa"/><path d="M986.8 44.4L1000.4 45.6L1000.2 59.8L987.8 56.8Z" fill="url(#gTealF)"/><path d="M995.4 49.8L993.8 37.8M995.4 49.8L987.8 56.8M995.4 49.8L1006.6 53.4" stroke="#3a8596" stroke-width="0.9" stroke-dasharray="1.5 1"/><path d="M986.8 44.4L1000.4 45.6L1000.2 59.8L987.8 56.8ZM986.8 44.4L993.8 37.8L1007.0 40.2L1000.4 45.6M1007.0 40.2L1006.6 53.4L1000.2 59.8" fill="none" stroke="#2f7d8e" stroke-width="1.3" stroke-linejoin="round"/><path d="M1021.6 44.4L1035.2 45.6L1035.0 59.8L1022.6 56.8ZM1021.6 44.4L1028.6 37.8L1041.8 40.2L1035.2 45.6ZM1035.2 45.6L1041.8 40.2L1041.4 53.4L1035.0 59.8Z" fill="#fafafa"/><path d="M1021.6 44.4L1028.6 37.8L1041.8 40.2L1035.2 45.6Z" fill="url(#gTealF)"/><path d="M1030.2 49.8L1028.6 37.8M1030.2 49.8L1022.6 56.8M1030.2 49.8L1041.4 53.4" stroke="#3a8596" stroke-width="0.9" stroke-dasharray="1.5 1"/><path d="M1021.6 44.4L1035.2 45.6L1035.0 59.8L1022.6 56.8ZM1021.6 44.4L1028.6 37.8L1041.8 40.2L1035.2 45.6M1041.8 40.2L1041.4 53.4L1035.0 59.8" fill="none" stroke="#2f7d8e" stroke-width="1.3" stroke-linejoin="round"/><path d="M1057.3 44.4L1070.9 45.6L1070.7 59.8L1058.3 56.8ZM1057.3 44.4L1064.3 37.8L1077.5 40.2L1070.9 45.6ZM1070.9 45.6L1077.5 40.2L1077.1 53.4L1070.7 59.8Z" fill="#fafafa"/><path d="M1070.9 45.6L1077.5 40.2L1077.1 53.4L1070.7 59.8Z" fill="url(#gTealF)"/><path d="M1065.9 49.8L1064.3 37.8M1065.9 49.8L1058.3 56.8M1065.9 49.8L1077.1 53.4" stroke="#3a8596" stroke-width="0.9" stroke-dasharray="1.5 1"/><path d="M1057.3 44.4L1070.9 45.6L1070.7 59.8L1058.3 56.8ZM1057.3 44.4L1064.3 37.8L1077.5 40.2L1070.9 45.6M1077.5 40.2L1077.1 53.4L1070.7 59.8" fill="none" stroke="#2f7d8e" stroke-width="1.3" stroke-linejoin="round"/><path d="M1103.5 44.4L1117.1 45.6L1116.9 59.8L1104.5 56.8ZM1103.5 44.4L1110.5 37.8L1123.7 40.2L1117.1 45.6ZM1117.1 45.6L1123.7 40.2L1123.3 53.4L1116.9 59.8Z" fill="#fafafa"/><path d="M1110.5 37.8L1123.7 40.2L1123.3 53.4L1112.1 49.8Z" fill="url(#gTealF)"/><path d="M1112.1 49.8L1110.5 37.8M1112.1 49.8L1104.5 56.8M1112.1 49.8L1123.3 53.4" stroke="#3a8596" stroke-width="0.9" stroke-dasharray="1.5 1"/><path d="M1103.5 44.4L1117.1 45.6L1116.9 59.8L1104.5 56.8ZM1103.5 44.4L1110.5 37.8L1123.7 40.2L1117.1 45.6M1123.7 40.2L1123.3 53.4L1116.9 59.8" fill="none" stroke="#2f7d8e" stroke-width="1.3" stroke-linejoin="round"/><path d="M1138.8 44.4L1152.4 45.6L1152.2 59.8L1139.8 56.8ZM1138.8 44.4L1145.8 37.8L1159.0 40.2L1152.4 45.6ZM1152.4 45.6L1159.0 40.2L1158.6 53.4L1152.2 59.8Z" fill="#fafafa"/><path d="M1139.8 56.8L1152.2 59.8L1158.6 53.4L1147.4 49.8Z" fill="url(#gTealF)"/><path d="M1147.4 49.8L1145.8 37.8M1147.4 49.8L1139.8 56.8M1147.4 49.8L1158.6 53.4" stroke="#3a8596" stroke-width="0.9" stroke-dasharray="1.5 1"/><path d="M1138.8 44.4L1152.4 45.6L1152.2 59.8L1139.8 56.8ZM1138.8 44.4L1145.8 37.8L1159.0 40.2L1152.4 45.6M1159.0 40.2L1158.6 53.4L1152.2 59.8" fill="none" stroke="#2f7d8e" stroke-width="1.3" stroke-linejoin="round"/><path d="M973.8 37.5V60.0" stroke="#d3d1cc" stroke-width="1"/><path d="M974.8 37.5V60.0" stroke="#fbfbfa" stroke-width="1"/><path d="M1090.8 37.5V60.0" stroke="#d3d1cc" stroke-width="1"/><path d="M1091.8 37.5V60.0" stroke="#fbfbfa" stroke-width="1"/><path d="M1187.5 47.2L1190.5 49.6L1187.5 52M1191.8 47.2L1194.8 49.6L1191.8 52" fill="none" stroke="#000" stroke-width="1.6"/><path d="M5.8 85.4h4.5M5.8 88.4h4.5M5.8 91.4h4.5" stroke="#b5b2ad" stroke-width="1"/><path d="M5.8 86.3h4.5M5.8 89.3h4.5M5.8 92.3h4.5" stroke="#ffffff" stroke-width="0.8"/><ellipse cx="36.0" cy="94.8" rx="5.5" ry="2.6" fill="url(#gShadow)" opacity="1.00"/><path d="M19.8 82.3L26.5 79.4L37.3 80.7L31.1 83.2Z" fill="#ffe84a" stroke="#9a7200" stroke-width="0.8" stroke-linejoin="round"/><path d="M31.1 83.2L37.3 80.7L36.9 93.6L31.1 96.1Z" fill="#ffb000" stroke="#9a7200" stroke-width="0.8" stroke-linejoin="round"/><path d="M19.8 82.3L31.1 83.2V96.1L20 95Z" fill="url(#gYel)" stroke="#9a7200" stroke-width="0.8" stroke-linejoin="round"/><ellipse cx="72.0" cy="94.5" rx="5.0" ry="2.5" fill="url(#gShadow)" opacity="1.00"/><path d="M55.8 81.5V93.8A8.1 2.6 0 0 0 72 93.8V81.5Z" fill="url(#gYel)" stroke="#9a7200" stroke-width="0.8"/><ellipse cx="63.9" cy="81.5" rx="8.1" ry="2.6" fill="#ffe440" stroke="#9a7200" stroke-width="0.8"/><ellipse cx="107.0" cy="95.0" rx="5.5" ry="2.6" fill="url(#gShadow)" opacity="1.00"/><circle cx="99.4" cy="88.2" r="8.2" fill="url(#gYelR)" stroke="#9a7200" stroke-width="0.8"/><ellipse cx="143.0" cy="94.5" rx="5.0" ry="2.5" fill="url(#gShadow)" opacity="1.00"/><path d="M134 79.3L142.2 94.5A8.2 2 0 0 1 125.8 94.5Z" fill="url(#gYel)" stroke="#9a7200" stroke-width="0.8" stroke-linejoin="round"/><ellipse cx="177.0" cy="93.0" rx="7.0" ry="2.8" fill="url(#gShadow)" opacity="1.00"/><ellipse cx="170.8" cy="86.8" rx="10" ry="6.8" fill="url(#gYelR)" stroke="#9a7200" stroke-width="0.8"/><ellipse cx="170.5" cy="85.8" rx="4.6" ry="1.9" fill="#f4f2ee" stroke="#a07800" stroke-width="0.8"/><path d="M204.5 81.5H218" stroke="#555" stroke-width="1.6"/><path d="M200.5 77.5L204.5 85H196.5Z" fill="url(#gYel)" stroke="#9a7200" stroke-width="0.6"/><path d="M203 86L206.5 84.5H214V96L210 98H203Z" fill="url(#gYel)" stroke="#9a7200" stroke-width="0.6"/><path d="M200.5 92.5m-4.2 0a4.2 4.2 0 1 0 8.4 0a4.2 4.2 0 1 0 -8.4 0M200.5 92.5m-2.5 0a2.5 2.5 0 1 0 5 0a2.5 2.5 0 1 0 -5 0M200.5 92.5m-1 0a1 1 0 1 0 2 0" fill="none" stroke="#222" stroke-width="0.9"/><circle cx="213.3" cy="93.3" r="5.3" fill="none" stroke="#202a80" stroke-width="1.1"/><path d="M244.5 77.5H253" stroke="#111" stroke-width="1.8"/><path d="M236.5 82.5L241.5 78.5" stroke="#e01818" stroke-width="1.6"/><path d="M242.5 77.5L240 77.2L241.8 80Z" fill="#e01818"/><path d="M249 79V84" stroke="#e01818" stroke-width="1.4"/><path d="M246.8 83.2H251.2L249 85.8Z" fill="#e01818"/><path d="M233.8 80.8L236 83.2L233.8 85.6L231.6 83.2Z" fill="#111"/><rect x="245.5" y="86.3" width="7.5" height="7" fill="#fff" stroke="#111" stroke-width="1.3"/><path d="M252 95.5L247.5 97.8" stroke="#e01818" stroke-width="1.4"/><path d="M246.5 98.3L249.5 96L249.8 99Z" fill="#e01818"/><path d="M231.5 89.5L234 88H242.5V97L240.5 98.5H231.5Z" fill="url(#gYel)" stroke="#9a7200" stroke-width="0.6"/><path d="M265.8 85.4h4.5M265.8 88.4h4.5M265.8 91.4h4.5" stroke="#b5b2ad" stroke-width="1"/><path d="M265.8 86.3h4.5M265.8 89.3h4.5M265.8 92.3h4.5" stroke="#ffffff" stroke-width="0.8"/><ellipse cx="298.0" cy="95.0" rx="4.0" ry="2.5" fill="url(#gShadow)" opacity="1.00"/><path d="M280.5 88.5L289 86.5L299.5 88.5V95.5L289 98L280.5 95.5Z" fill="url(#gPB)" stroke="#2a3a9a" stroke-width="0.6"/><path d="M280.5 88.5L289 90.5L299.5 88.5L289 86.5Z" fill="#b8c8f4" stroke="#2a3a9a" stroke-width="0.5"/><path d="M286.8 89.5V84H283.2L289 78.1L295 84H291.3V89.5Z" fill="url(#gPBd)" stroke="#0c2070" stroke-width="0.5"/><path d="M319.37 95.13A9.80 9.80 0 0 1 325.96 78.41L326.15 84.00A4.20 4.20 0 0 0 323.33 91.17Z" fill="url(#gSphB)" stroke="#0a1a60" stroke-width="0.7"/><path d="M332.98 95.37A9.80 9.80 0 0 1 319.62 95.37L323.44 91.27A4.20 4.20 0 0 0 329.16 91.27Z" fill="#8a9ae4" stroke="#6a78d0" stroke-width="0.5"/><path d="M329.67 79.86A9.00 9.00 0 0 1 334.76 91.28L331.19 89.98A5.20 5.20 0 0 0 328.25 83.38Z" fill="#0c2a9a" stroke="#061a70" stroke-width="0.5"/><path d="M328.8 78.5L335.8 80.2L331.5 83.5Z" fill="#0c2a9a"/><circle cx="326.3" cy="88.2" r="1.3" fill="#111"/><path d="M350.8 82.8L358.4 80.4V93.8L350.8 96.2Z" fill="url(#gPB)" stroke="#2a3a9a" stroke-width="0.6"/><path d="M364.3 80.4L371.3 85.7V95.6L364.3 93.8Z" fill="url(#gPBd)" stroke="#0c2070" stroke-width="0.6"/><path d="M361.3 77.5V99" stroke="#ff1010" stroke-width="1.6" stroke-dasharray="2.5 1.5"/><path d="M397.0 90L407.0 90.5V95.5L397.0 97.8Z" fill="#4a4a4a"/><path d="M386.1 86.3L397.0 88.4V97.7L386.1 94.6Z" fill="url(#gPB)" stroke="#3a4ac0" stroke-width="0.6"/><path d="M386.1 86.3Q386.5 80.5 390.0 79.5L395.9 78.3L406.8 81.2L400.0 83.8Q397.5 85.5 397.0 88.4Z" fill="url(#gPBd)" stroke="#0a1a70" stroke-width="0.6"/><path d="M388.0 81.5Q389.0 80 392.0 80L401.0 82.5L397.0 84.5Z" fill="#4a7ae0" opacity="0.8"/><path d="M432.3 90L442.3 90.5V95.5L432.3 97.8Z" fill="#4a4a4a"/><path d="M421.4 86.3L432.3 88.4V97.7L421.4 94.6Z" fill="url(#gPB)" stroke="#3a4ac0" stroke-width="0.6"/><path d="M421.4 86.3L424.8 82L431.2 78.3L442.1 81.2L435.3 83.8L432.3 88.4Z" fill="url(#gPBd)" stroke="#0a1a70" stroke-width="0.6"/><path d="M424.8 82L431.3 79L437.3 81.5L431.8 84.5Z" fill="#5a90ec"/><path d="M459.3 82.2L475.1 78.4V91.5L459.3 95.6Z" fill="url(#gPB)"/><path d="M459.3 82.2V95.6M475.1 78.4V91.5" stroke="#ff1010" stroke-width="2"/><path d="M499.6 79L509.6 81.9V91.9L499.2 95.2L495 94V89.4Z" fill="url(#gPB)" stroke="#1a2a90" stroke-width="0.5"/><path d="M499.6 79L509.6 81.9L498.8 89.5L495 89.4Z" fill="url(#gPBd)"/><path d="M499.6 79L509.6 81.9V91.9" fill="none" stroke="#ff1010" stroke-width="1.5"/><rect x="495.5" y="89.6" width="3.5" height="5.4" fill="#fff" stroke="#ff1010" stroke-width="1.2"/><path d="M536.7 79L545 80.3Q548 84 548.3 88Q546 96 538.5 98.3L536 89.6Q537.5 86 536.7 79Z" fill="url(#gPBd)" stroke="#1a2a90" stroke-width="0.5"/><path d="M539 90Q543 88 545 84" fill="none" stroke="#6a8ae8" stroke-width="0.8"/><path d="M536.7 79L545 80.3M544.8 80.5L549.2 77.3M545 80.5L548.3 87.8" fill="none" stroke="#ff1010" stroke-width="1.4"/><rect x="530.8" y="89.8" width="5.3" height="8.5" fill="#fff" stroke="#ff1010" stroke-width="1.3"/><path d="M526.7 94H531" stroke="#ff1010" stroke-width="1.6"/><path d="M532.5 92.5H534.5V95.5" fill="none" stroke="#222" stroke-width="0.5"/><path d="M562.8 97.4L567 93.3H582L578 97.4Z" fill="#a8a8a8" stroke="#8a8a8a" stroke-width="0.5"/><path d="M563.3 91L567.5 87.5H582.5L578.5 91Z" fill="#a8a8a8" stroke="#8a8a8a" stroke-width="0.5"/><path d="M570 89.5V83.9H566L572.2 78.2L578.4 83.9H574.5V89.5Z" fill="url(#gGrayD)" stroke="#7a7a7a" stroke-width="0.5"/><path d="M598.5 89.5L604 86.5H618.5V95.5L613 98.5H598.5Z" fill="url(#gGrayV)" stroke="#8a8a8a" stroke-width="0.6"/><path d="M598.5 89.5L604 86.5H618.5L613 89.5Z" fill="#bdbdbd" stroke="#8a8a8a" stroke-width="0.5"/><path d="M613 89.5V98.5L618.5 95.5V86.5Z" fill="#9a9a9a"/><path d="M618.5 92.5H620.2V95.5H618.5Z" fill="#888"/><path d="M632.0 85.4h4.5M632.0 88.4h4.5M632.0 91.4h4.5" stroke="#b5b2ad" stroke-width="1"/><path d="M632.0 86.3h4.5M632.0 89.3h4.5M632.0 92.3h4.5" stroke="#ffffff" stroke-width="0.8"/><ellipse cx="664.0" cy="92.0" rx="5.0" ry="2.2" fill="url(#gShadow)" opacity="1.00"/><circle cx="660.7" cy="83.9" r="6.8" fill="url(#gSphL)" stroke="#5068c0" stroke-width="0.6"/><ellipse cx="659.0" cy="97.5" rx="6.0" ry="2.3" fill="url(#gShadow)" opacity="1.00"/><circle cx="654" cy="90.7" r="7.8" fill="url(#gSphB)" stroke="#0a1a60" stroke-width="0.6"/><ellipse cx="694.0" cy="97.5" rx="6.0" ry="2.0" fill="url(#gShadow)" opacity="1.00"/><circle cx="688.8" cy="90.9" r="7.5" fill="url(#gSphG)"/><circle cx="695.8" cy="83.9" r="6.8" fill="#fff" stroke="#7a7a7a" stroke-width="1"/><ellipse cx="729.0" cy="97.0" rx="6.0" ry="2.0" fill="url(#gShadow)" opacity="1.00"/><circle cx="730.8" cy="83.9" r="7" fill="url(#gSphG)"/><circle cx="723.8" cy="90.3" r="7.5" fill="url(#gSphG)"/><ellipse cx="766.0" cy="96.0" rx="5.0" ry="1.8" fill="url(#gShadow)" opacity="1.00"/><circle cx="759.4" cy="90.9" r="7.3" fill="#fff" stroke="#6a6a6a" stroke-width="1"/><circle cx="766.4" cy="83.9" r="6.8" fill="#fff" fill-opacity="0.6" stroke="#6a6a6a" stroke-width="1"/><path d="M759.8 83.6A6.8 6.8 0 0 1 766.4 90.7A7.3 7.3 0 0 1 759.8 83.6Z" fill="#7a7a7a"/><ellipse cx="803.0" cy="97.0" rx="5.0" ry="1.8" fill="url(#gShadow)" opacity="1.00"/><path d="M796 82L803.8 96.5A7.9 1.8 0 0 1 788 96.5Z" fill="url(#gGrayD)" stroke="#7a7a7a" stroke-width="0.5"/><circle cx="796.2" cy="82.2" r="4.3" fill="#d8d8d8" fill-opacity="0.9" stroke="#9a9a9a" stroke-width="1"/><path d="M799.5 85L808 90.5" stroke="#6a6a6a" stroke-width="1.2"/><path d="M823.3 80.5V94.5L837.5 98.5V95" fill="none" stroke="#b8b8b8" stroke-width="0.8"/><path d="M825.5 80L830.5 77.3H843.5V92.5L844.5 93V96.5H839L837 98H825.5Z" fill="#a4a4a4" stroke="#8a8a8a" stroke-width="0.5"/><path d="M826.5 81.5H837.5V95.5H826.5Z" fill="#8c8c8c"/><path d="M826.5 81.5L831 85.5H837.5M831 85.5V95.5" stroke="#5a5a5a" stroke-width="0.8" fill="none"/><path d="M837.5 81.5L841 79.3V93L837.5 95.5Z" fill="#c8c8c8"/><path d="M826.5 81.5L830.5 79.3H841L837.5 81.5Z" fill="#bdbdbd"/><path d="M857.5 87L864 80.8H880.8L874.3 87Z" fill="#b4b4b4" stroke="#8a8a8a" stroke-width="0.6"/><path d="M857.5 94L864 87.8H880.8L874.3 94Z" fill="#b4b4b4" stroke="#8a8a8a" stroke-width="0.6"/><path d="M863.5 79.5L866.5 77H876V96.5L873 99H863.5Z" fill="url(#gGrayD)" fill-opacity="0.85" stroke="#6a6a6a" stroke-width="0.6"/><path d="M863.5 79.5L866.5 77H876L873 79.5Z" fill="#7a7a7a"/><path d="M873 79.5V99L876 96.5V77Z" fill="#8a8a8a" fill-opacity="0.8"/><path d="M863.5 87H873.5M863.5 94H873.5" stroke="#7a7a7a" stroke-width="0.8"/><path d="M892.0 85.4h4.5M892.0 88.4h4.5M892.0 91.4h4.5" stroke="#b5b2ad" stroke-width="1"/><path d="M892.0 86.3h4.5M892.0 89.3h4.5M892.0 92.3h4.5" stroke="#ffffff" stroke-width="0.8"/><path d="M919.0 93.5L927.0 96.0" stroke="#f0e060" stroke-width="2.2"/><path d="M920.0 93.7L926.5 95.7" stroke="#8a7a20" stroke-width="0.6" stroke-dasharray="0.8 1"/><path d="M921.0 81.0L927.0 86.0L925.0 94.0L920.0 94.0Z" fill="#6a6a6a" opacity="0.55"/><rect x="906.0" y="77.5" width="16" height="18" rx="4" fill="url(#gGrayB)" stroke="#7a7a7a" stroke-width="0.8"/><rect x="907.2" y="79.5" width="12" height="13.5" rx="3.5" fill="#e8e8e8" stroke="#a8a8a8" stroke-width="0.6"/><circle cx="912.5" cy="86.6" r="5.2" fill="#000"/><path d="M907.6 85.2A5.2 5.2 0 0 1 917.6 87.4Z" fill="#f8f000"/><ellipse cx="920.0" cy="87.0" rx="1.4" ry="3" fill="#e8e000"/><path d="M955.0 94.0L963.0 96.5" stroke="#f0e060" stroke-width="2.2"/><path d="M956.0 94.2L962.5 96.2" stroke="#8a7a20" stroke-width="0.6" stroke-dasharray="0.8 1"/><path d="M957.0 81.5L963.0 86.5L961.0 94.5L956.0 94.5Z" fill="#6a6a6a" opacity="0.55"/><rect x="942.0" y="78.0" width="16" height="18" rx="4" fill="url(#gGrayB)" stroke="#7a7a7a" stroke-width="0.8"/><rect x="943.2" y="80.0" width="12" height="13.5" rx="3.5" fill="#e8e8e8" stroke="#a8a8a8" stroke-width="0.6"/><circle cx="948.5" cy="87.1" r="5.2" fill="#000"/><path d="M943.6 85.7A5.2 5.2 0 0 1 953.6 87.9Z" fill="#f8f000"/><ellipse cx="956.0" cy="87.5" rx="1.4" ry="3" fill="#e8e000"/><path d="M942.8 79.5L948.4 97L962.5 81.8" fill="none" stroke="#3a1010" stroke-width="3.4" stroke-linejoin="miter"/><path d="M942.8 79.5L948.4 97L962.5 81.8" fill="none" stroke="#e83a28" stroke-width="2" stroke-linejoin="miter"/><path d="M946 80.5Q953 75.5 960 80" fill="none" stroke="#1a4aa8" stroke-width="1.8"/><path d="M958 78L962 81L957.5 82Z" fill="#000"/><path d="M975.6 77.0V99.0" stroke="#d3d1cc" stroke-width="1"/><path d="M976.6 77.0V99.0" stroke="#fbfbfa" stroke-width="1"/><path d="M1001.0 93.5L1009.0 96.0" stroke="#f0e060" stroke-width="2.2"/><path d="M1002.0 93.7L1008.5 95.7" stroke="#8a7a20" stroke-width="0.6" stroke-dasharray="0.8 1"/><path d="M1003.0 81.0L1009.0 86.0L1007.0 94.0L1002.0 94.0Z" fill="#6a6a6a" opacity="0.55"/><rect x="988.0" y="77.5" width="16" height="18" rx="4" fill="url(#gGrayB)" stroke="#7a7a7a" stroke-width="0.8"/><rect x="989.2" y="79.5" width="12" height="13.5" rx="3.5" fill="#e8e8e8" stroke="#a8a8a8" stroke-width="0.6"/><circle cx="994.5" cy="86.6" r="5.2" fill="#000"/><path d="M989.6 85.2A5.2 5.2 0 0 1 999.6 87.4Z" fill="#f8f000"/><ellipse cx="1002.0" cy="87.0" rx="1.4" ry="3" fill="#e8e000"/><path d="M989.5 95L1005 80.5L1008 83.5L992.5 98Z" fill="#ece088" stroke="#6a5a20" stroke-width="0.6"/><path d="M989.5 95L992.5 98L990.5 98.5Q988 98.5 988.5 96Z" fill="#d88888" stroke="#6a3a3a" stroke-width="0.5"/><path d="M1005 80.5L1009.5 77L1008 83.5Z" fill="#222"/><path d="M1038.5 94.5L1046.5 97.0" stroke="#f0e060" stroke-width="2.2"/><path d="M1039.5 94.7L1046.0 96.7" stroke="#8a7a20" stroke-width="0.6" stroke-dasharray="0.8 1"/><path d="M1040.5 82.0L1046.5 87.0L1044.5 95.0L1039.5 95.0Z" fill="#6a6a6a" opacity="0.55"/><rect x="1025.5" y="78.5" width="16" height="18" rx="4" fill="url(#gGrayB)" stroke="#7a7a7a" stroke-width="0.8"/><rect x="1026.7" y="80.5" width="12" height="13.5" rx="3.5" fill="#e8e8e8" stroke="#a8a8a8" stroke-width="0.6"/><circle cx="1032.0" cy="87.6" r="5.2" fill="#000"/><path d="M1027.1 86.2A5.2 5.2 0 0 1 1037.1 88.4Z" fill="#f8f000"/><ellipse cx="1039.5" cy="88.0" rx="1.4" ry="3" fill="#e8e000"/><path d="M1025 96.5V80.3H1044.4V96.5" fill="none" stroke="#1a7a1a" stroke-width="2.2"/><path d="M1023.8 89.4L1031.3 78.4L1044 86.6L1035.4 97.6" fill="none" stroke="#c83030" stroke-width="2.3"/><path d="M1072.5 94.5L1080.5 97.0" stroke="#f0e060" stroke-width="2.2"/><path d="M1073.5 94.7L1080.0 96.7" stroke="#8a7a20" stroke-width="0.6" stroke-dasharray="0.8 1"/><path d="M1074.5 82.0L1080.5 87.0L1078.5 95.0L1073.5 95.0Z" fill="#6a6a6a" opacity="0.55"/><rect x="1059.5" y="78.5" width="16" height="18" rx="4" fill="url(#gGrayB)" stroke="#7a7a7a" stroke-width="0.8"/><rect x="1060.7" y="80.5" width="12" height="13.5" rx="3.5" fill="#e8e8e8" stroke="#a8a8a8" stroke-width="0.6"/><circle cx="1066.0" cy="87.6" r="5.2" fill="#000"/><path d="M1061.1 86.2A5.2 5.2 0 0 1 1071.1 88.4Z" fill="#f8f000"/><ellipse cx="1073.5" cy="88.0" rx="1.4" ry="3" fill="#e8e000"/><path d="M1059.2 89.4L1066.7 78.4L1079.4 86.6L1070.4 97.6" fill="none" stroke="#c83030" stroke-width="2.3"/><path d="M1109.0 94.5L1117.0 97.0" stroke="#f0e060" stroke-width="2.2"/><path d="M1110.0 94.7L1116.5 96.7" stroke="#8a7a20" stroke-width="0.6" stroke-dasharray="0.8 1"/><path d="M1111.0 82.0L1117.0 87.0L1115.0 95.0L1110.0 95.0Z" fill="#6a6a6a" opacity="0.55"/><rect x="1096.0" y="78.5" width="16" height="18" rx="4" fill="url(#gGrayB)" stroke="#7a7a7a" stroke-width="0.8"/><rect x="1097.2" y="80.5" width="12" height="13.5" rx="3.5" fill="#e8e8e8" stroke="#a8a8a8" stroke-width="0.6"/><circle cx="1102.5" cy="87.6" r="5.2" fill="#000"/><path d="M1097.6 86.2A5.2 5.2 0 0 1 1107.6 88.4Z" fill="#f8f000"/><ellipse cx="1110.0" cy="88.0" rx="1.4" ry="3" fill="#e8e000"/><path d="M1095.6 96.3V80.5H1114.8V96.5" fill="none" stroke="#1a7a1a" stroke-width="2.2"/></svg><div class="t" style="left:475px;top:41.6px;font-size:14px;line-height:14px;color:#3c3c3c;letter-spacing:0.1px">Part</div>
</body></html>
